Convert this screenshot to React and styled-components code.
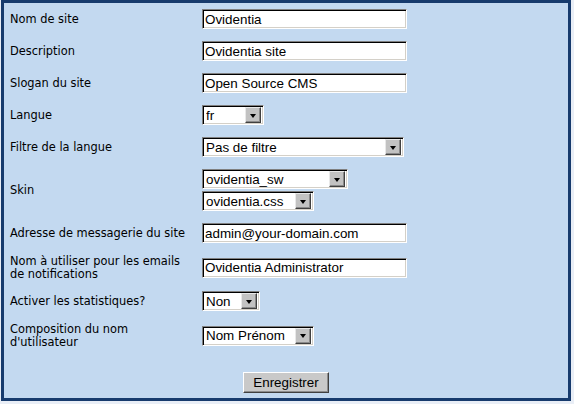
import React from "react";
import styled, { createGlobalStyle } from "styled-components";

const GlobalStyle = createGlobalStyle`
  body {
    margin: 0;
    background: #e9eef6;
  }
`;

const Panel = styled.form`
  box-sizing: border-box;
  width: 570px;
  height: 401px;
  margin-left: 1px;
  border: 3px solid #173b6d;
  background: #c3d9f0;
  font-family: "DejaVu Sans", Verdana, sans-serif;
  font-size: 11.4px;
  color: #000;
`;

const Row = styled.div`
  display: grid;
  grid-template-columns: 192px 1fr;
  align-items: center;
  padding: ${(p) => (p.$multi ? "5px 0 4px 6px" : "6px 0 6px 6px")};
`;

const Label = styled.label`
  line-height: 13px;
  padding-top: 1px;
`;

const Stack = styled.div`
  display: flex;
  flex-direction: column;
  align-items: flex-start;
  gap: 2px;
`;

const sunken = `
  box-sizing: border-box;
  height: 20px;
  background: #fff;
  border-style: solid;
  border-width: 1px;
  border-color: #808080 #fff #fff #808080;
  box-shadow: inset 1px 1px 0 #000, inset -1px -1px 0 #d4d0c8;
  font-family: "Liberation Sans", Arial, sans-serif;
  font-size: 13.4px;
  color: #000;
`;

const TextField = styled.input`
  ${sunken}
  width: ${(p) => p.$w || 205}px;
  padding: 0 2px;
  outline: none;
`;

const SelectBox = styled.div`
  ${sunken}
  width: ${(p) => p.$w}px;
  display: flex;
  align-items: center;
  padding: 0 2px 0 3px;
`;

const SelectText = styled.span`
  flex: 1;
  white-space: nowrap;
  overflow: hidden;
`;

const Arrow = styled.span`
  box-sizing: border-box;
  width: 16px;
  height: 16px;
  display: flex;
  align-items: center;
  justify-content: center;
  background: #c2c2c2;
  border-style: solid;
  border-width: 1px;
  border-color: #e8e8e8 #404040 #404040 #e8e8e8;
  box-shadow: inset -1px -1px 0 #8a8a8a;

  &::after {
    content: "";
    width: 0;
    height: 0;
    border-left: 3.5px solid transparent;
    border-right: 3.5px solid transparent;
    border-top: 4px solid #000;
    margin-top: 1px;
  }
`;

const Select = ({ value, w }) => (
  <SelectBox $w={w}>
    <SelectText>{value}</SelectText>
    <Arrow />
  </SelectBox>
);

const Footer = styled.div`
  display: flex;
  justify-content: center;
  padding-top: 19px;
`;

const Button = styled.button`
  box-sizing: border-box;
  width: 86px;
  height: 21px;
  padding: 0;
  background: #c9c9c9;
  border-style: solid;
  border-width: 1px;
  border-color: #fff #404040 #404040 #fff;
  box-shadow: inset -1px -1px 0 #8c8c8c;
  font-family: "Liberation Sans", Arial, sans-serif;
  font-size: 13.4px;
  color: #000;
`;

export default function App() {
  return (
    <>
      <GlobalStyle />
      <Panel onSubmit={(e) => e.preventDefault()}>
        <Row>
          <Label>Nom de site</Label>
          <TextField defaultValue="Ovidentia" />
        </Row>
        <Row>
          <Label>Description</Label>
          <TextField defaultValue="Ovidentia site" />
        </Row>
        <Row>
          <Label>Slogan du site</Label>
          <TextField defaultValue="Open Source CMS" />
        </Row>
        <Row>
          <Label>Langue</Label>
          <Select value="fr" w={62} />
        </Row>
        <Row>
          <Label>Filtre de la langue</Label>
          <Select value="Pas de filtre" w={202} />
        </Row>
        <Row>
          <Label>Skin</Label>
          <Stack>
            <Select value="ovidentia_sw" w={146} />
            <Select value="ovidentia.css" w={112} />
          </Stack>
        </Row>
        <Row>
          <Label>Adresse de messagerie du site</Label>
          <TextField defaultValue="admin@your-domain.com" />
        </Row>
        <Row $multi>
          <Label>
            Nom à utiliser pour les emails
            <br />
            de notifications
          </Label>
          <TextField defaultValue="Ovidentia Administrator" />
        </Row>
        <Row>
          <Label>Activer les statistiques?</Label>
          <Select value="Non" w={58} />
        </Row>
        <Row $multi>
          <Label>
            Composition du nom
            <br />
            d'utilisateur
          </Label>
          <Select value="Nom Prénom" w={112} />
        </Row>
        <Footer>
          <Button type="submit">Enregistrer</Button>
        </Footer>
      </Panel>
    </>
  );
}
